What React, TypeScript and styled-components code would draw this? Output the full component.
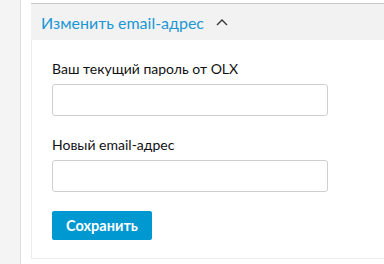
import styled, { createGlobalStyle } from "styled-components";

const GlobalStyle = createGlobalStyle`
  html, body {
    margin: 0;
    padding: 0;
    background: #ffffff;
    font-family: Lato, "Noto Sans", sans-serif;
  }
`;

const Page = styled.div`
  display: flex;
  width: 384px;
  height: 264px;
  overflow: hidden;
`;

const Sidebar = styled.div`
  width: 20px;
  flex-shrink: 0;
  background: #f4f4f4;
  border-right: 1px solid #dddddd;
`;

const Main = styled.div`
  flex: 1;
  padding: 3px 0 0 10px;
`;

const Panel = styled.section`
  width: 420px;
  border-top: 1px solid #c8c8c8;
`;

const Header = styled.div`
  display: flex;
  align-items: center;
  gap: 12px;
  height: 36px;
  padding-left: 10px;
  background: #f2f2f2;
`;

const Title = styled.h3`
  margin: 0;
  font-size: 16px;
  font-weight: 400;
  color: #1b98d4;
`;

const Body = styled.div`
  display: flex;
  flex-direction: column;
  padding: 20px 0 18px 20px;
  border-left: 1px solid #ececec;
  border-bottom: 1px solid #ececec;
`;

const Field = styled.div`
  display: flex;
  flex-direction: column;
  margin-bottom: 20px;

  &:last-of-type {
    margin-bottom: 19px;
  }
`;

const Label = styled.label`
  font-size: 14px;
  line-height: 18px;
  color: #111111;
  margin-bottom: 6px;
`;

const Input = styled.input`
  box-sizing: border-box;
  width: 276px;
  height: 32px;
  border: 1px solid #cfcfcf;
  border-radius: 3px;
  background: #ffffff;
  outline: none;
`;

const Button = styled.button`
  align-self: flex-start;
  width: 100px;
  height: 29px;
  border: none;
  border-radius: 2px;
  background: #0098d0;
  color: #ffffff;
  font-family: Lato, "Noto Sans", sans-serif;
  font-size: 14.5px;
  font-weight: 700;
  cursor: pointer;
`;

function ChevronUp() {
  return (
    <svg width="12" height="8" viewBox="0 0 12 8" fill="none">
      <path d="M1 7 L6 2 L11 7" stroke="#333" strokeWidth="1.3" />
    </svg>
  );
}

export default function App() {
  return (
    <>
      <GlobalStyle />
      <Page>
        <Sidebar />
        <Main>
          <Panel>
            <Header>
              <Title>Изменить email-адрес</Title>
              <ChevronUp />
            </Header>
            <Body>
              <Field>
                <Label>Ваш текущий пароль от OLX</Label>
                <Input type="password" />
              </Field>
              <Field>
                <Label>Новый email-адрес</Label>
                <Input type="email" />
              </Field>
              <Button>Сохранить</Button>
            </Body>
          </Panel>
        </Main>
      </Page>
    </>
  );
}
